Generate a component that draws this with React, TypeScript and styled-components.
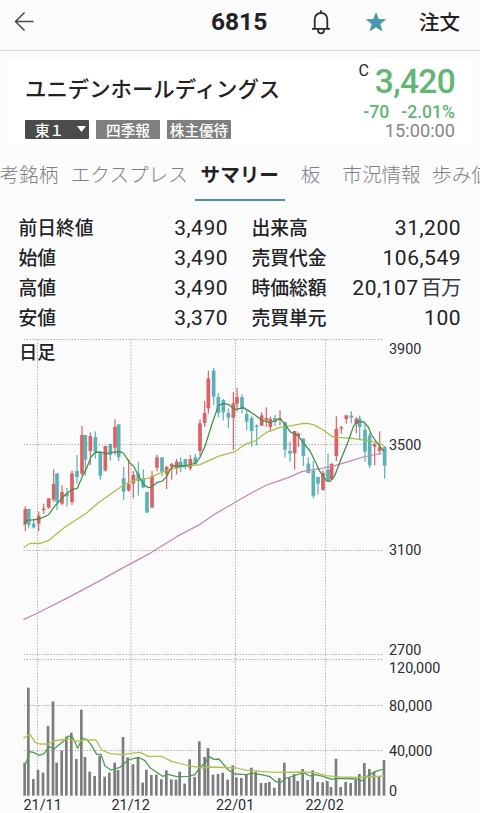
import styled, { createGlobalStyle } from "styled-components";

const GlobalStyle = createGlobalStyle`
  * {
    box-sizing: border-box;
  }
  body {
    margin: 0;
    background: #fbfbfc;
    color: #222224;
    font-family: Roboto, "Noto Sans CJK JP", sans-serif;
  }
`;

const Page = styled.div`
  width: 480px;
  height: 813px;
  overflow: hidden;
`;

const Header = styled.header`
  display: flex;
  align-items: center;
  height: 51px;
  padding: 0 20px 6px 13px;
  border-bottom: 1px solid #dcdcde;
`;

const Code = styled.h1`
  flex: 1;
  margin: 0;
  padding-left: 176px;
  font-size: 24.5px;
  font-weight: 700;
  line-height: 30px;
`;

const HeaderIcons = styled.div`
  display: flex;
  align-items: center;
  gap: 33px;
  margin-right: 32px;
`;

const OrderButton = styled.span`
  padding-top: 2px;
  font-size: 20.5px;
  font-weight: 500;
  line-height: 30px;
`;

const Card = styled.section`
  display: flex;
  justify-content: space-between;
  height: 85px;
  margin: 8px 8px 0;
  padding: 0 17px;
  background: #fff;
`;

const Name = styled.div`
  height: 61px;
  padding-top: 15px;
  font-size: 21.4px;
  font-weight: 500;
  line-height: 32px;
  white-space: nowrap;
`;

const Badges = styled.div`
  display: flex;
  gap: 7px;
`;

const Badge = styled.div<{ $dark?: boolean }>`
  display: flex;
  align-items: center;
  justify-content: center;
  gap: 13px;
  width: 64px;
  height: 18.5px;
  padding-left: ${({ $dark }) => ($dark ? "7px" : 0)};
  border-radius: 1px;
  background: ${({ $dark }) => ($dark ? "#4b4b4b" : "#7f7f7f")};
  color: #fff;
  font-family: "Noto Sans CJK JP", sans-serif;
  font-size: 14.6px;
  font-weight: 500;
  line-height: 17px;
  white-space: nowrap;
`;

const Quote = styled.div`
  display: flex;
  flex-direction: column;
  align-items: flex-end;
  white-space: nowrap;
`;

const PriceLine = styled.div`
  display: flex;
  align-items: flex-start;
  gap: 6px;
  height: 44px;
`;

const Mark = styled.span`
  padding-top: 2px;
  font-size: 16px;
  line-height: 19px;
`;

const Price = styled.span`
  color: #62b673;
  font-size: 33.5px;
  font-weight: 500;
  letter-spacing: -0.7px;
  line-height: 45px;
`;

const Change = styled.div`
  display: flex;
  gap: 12px;
  height: 18px;
  color: #62b673;
  font-size: 17.6px;
  font-weight: 500;
  line-height: 18px;
`;

const Time = styled.div`
  color: #858587;
  font-size: 18.2px;
  line-height: 19px;
`;

const Tabs = styled.nav`
  display: flex;
  height: 57px;
  padding-top: 15px;
  overflow: hidden;
  font-size: 19.6px;
  line-height: 34px;
  white-space: nowrap;
`;

const Tab = styled.div<{ $width: number; $gap?: number; $active?: boolean }>`
  display: flex;
  flex: none;
  justify-content: center;
  width: ${({ $width }) => $width}px;
  height: 41.5px;
  margin-left: ${({ $gap = 0 }) => $gap}px;
  color: ${({ $active }) => ($active ? "#222224" : "#808082")};
  font-weight: ${({ $active }) => ($active ? 700 : 300)};
  border-bottom: ${({ $active }) => ($active ? "2px solid #4b96a5" : "none")};
`;

const Stats = styled.div`
  display: grid;
  grid-template-columns: 209px 209px;
  grid-auto-rows: 30px;
  column-gap: 24px;
  height: 134px;
  padding: 12px 19px 0;
`;

const Stat = styled.div`
  display: flex;
  justify-content: space-between;
  line-height: 30px;
  white-space: nowrap;
`;

const Label = styled.span`
  padding-top: 1px;
  margin-left: -0.5px;
  font-size: 18.8px;
  font-weight: 500;
`;

const Value = styled.span`
  font-size: 21px;
  font-weight: 400;
  letter-spacing: 0.5px;

  small {
    margin-left: 2.5px;
    font-size: 20.5px;
    font-weight: 400;
    letter-spacing: -0.5px;
    color: #3c3c3e;
  }
`;

const Chart = styled.svg`
  display: block;
`;

const stats = [
  ["前日終値", "3,490", ""],
  ["出来高", "31,200", ""],
  ["始値", "3,490", ""],
  ["売買代金", "106,549", ""],
  ["高値", "3,490", ""],
  ["時価総額", "20,107", "百万"],
  ["安値", "3,370", ""],
  ["売買単元", "100", ""],
];

const tabs = [
  { label: "考銘柄", width: 58 },
  { label: "エクスプレス", width: 130.5, gap: 6 },
  { label: "サマリー", width: 90.5 },
  { label: "板", width: 51 },
  { label: "市況情報", width: 91 },
  { label: "歩み値", width: 60, gap: 4.5 },
];

const RED = "#dc6164";
const TEAL = "#5cb1b6";

// x, high, low, body top, body bottom, up (1) or down (0)
type Candle = [number, number, number, number, number, number];

const candles: { dx: number; items: Candle[] }[] = [
  {
    dx: 45,
    items: [
      [31, 514, 588, 522, 566, 1],
      [41, 522, 580, 522, 569, 0],
      [56, 550, 580, 566, 577, 0],
      [71, 530, 588, 542, 566, 1],
      [86, 506, 536, 521, 525, 1],
      [101, 490, 521, 490, 518, 1],
      [116, 403, 500, 447, 494, 1],
      [126, 415, 525, 415, 500, 0],
      [141, 451, 510, 471, 506, 1],
      [156, 459, 515, 476, 484, 0],
      [171, 407, 510, 415, 501, 1],
      [186, 360, 446, 408, 426, 0],
      [201, 273, 422, 300, 416, 1],
      [211, 300, 422, 300, 374, 0],
      [226, 292, 390, 303, 348, 1],
      [241, 289, 371, 306, 350, 0],
      [256, 350, 434, 350, 422, 0],
      [271, 333, 410, 333, 406, 1],
      [286, 325, 377, 328, 360, 0],
      [300, 253, 360, 276, 338, 1],
      [311, 268, 378, 268, 366, 0],
      [326, 396, 494, 430, 470, 0],
      [341, 372, 470, 447, 466, 1],
      [355, 408, 490, 420, 446, 1],
      [370, 380, 482, 415, 438, 0],
      [385, 403, 458, 432, 458, 0],
    ],
  },
  {
    dx: 405,
    items: [
      [36, 471, 533, 471, 533, 0],
      [51, 408, 518, 424, 518, 1],
      [66, 360, 408, 367, 398, 1],
      [81, 367, 423, 367, 410, 0],
      [95, 392, 462, 396, 418, 1],
      [110, 384, 434, 387, 395, 1],
      [125, 372, 418, 380, 400, 1],
      [137, 367, 411, 380, 396, 0],
      [151, 372, 403, 372, 396, 0],
      [166, 360, 406, 372, 400, 1],
      [181, 356, 390, 367, 386, 0],
      [195, 254, 362, 265, 348, 1],
      [209, 198, 276, 234, 264, 1],
      [220, 107, 236, 130, 220, 1],
      [236, 99, 210, 107, 185, 0],
      [250, 174, 247, 186, 234, 0],
      [265, 192, 256, 195, 232, 0],
      [280, 220, 280, 234, 248, 0],
      [295, 171, 345, 205, 248, 1],
      [306, 158, 230, 186, 206, 1],
      [321, 178, 235, 186, 222, 0],
      [335, 225, 285, 237, 260, 0],
      [350, 242, 335, 249, 288, 0],
      [365, 268, 331, 272, 276, 0],
      [380, 232, 272, 241, 272, 1],
    ],
  },
  {
    dx: 765,
    items: [
      [34, 217, 276, 249, 256, 1],
      [46, 245, 290, 252, 276, 1],
      [60, 240, 273, 249, 261, 0],
      [75, 225, 270, 250, 254, 1],
      [90, 261, 367, 261, 344, 0],
      [105, 320, 380, 348, 356, 0],
      [119, 288, 403, 288, 355, 1],
      [130, 293, 336, 295, 303, 1],
      [145, 309, 393, 311, 363, 0],
      [160, 367, 414, 386, 414, 0],
      [175, 378, 490, 407, 482, 0],
      [189, 426, 478, 426, 446, 0],
      [204, 406, 467, 414, 465, 1],
      [219, 356, 438, 404, 436, 0],
      [230, 384, 435, 387, 433, 1],
      [244, 244, 378, 282, 363, 1],
      [259, 273, 296, 277, 281, 1],
      [274, 240, 266, 241, 252, 1],
      [289, 229, 265, 242, 248, 0],
      [304, 246, 295, 252, 267, 1],
      [314, 242, 313, 250, 276, 0],
      [330, 262, 380, 285, 350, 0],
      [344, 293, 399, 301, 391, 0],
      [359, 323, 391, 327, 335, 1],
      [374, 289, 358, 336, 348, 1],
      [389, 333, 431, 336, 392, 0],
    ],
  },
];

// x, top
const volumes: { dx: number; items: [number, number][] }[] = [
  {
    dx: 30,
    items: [
      [44, 368], [55, 143], [70, 417], [84, 390], [99, 398], [114, 258], [129, 184],
      [140, 368], [155, 332], [169, 290], [184, 278], [199, 357], [214, 209], [225, 351],
      [239, 395], [254, 408], [269, 347], [284, 410], [298, 398], [314, 368], [324, 390],
      [339, 291], [353, 352], [369, 373], [384, 352], [398, 428], [409, 389],
    ],
  },
  {
    dx: 420,
    items: [
      [34, 405], [49, 404], [64, 418], [79, 391], [94, 418], [108, 419], [119, 395],
      [134, 431], [149, 358], [164, 411], [178, 304], [194, 351], [204, 324], [219, 404],
      [234, 402], [248, 398], [263, 419], [278, 376], [289, 412], [304, 414], [319, 403],
      [334, 383], [347, 396],
    ],
  },
  {
    dx: 780,
    items: [
      [3, 429], [17, 429], [28, 426], [43, 443], [58, 414], [73, 368], [88, 412],
      [102, 402], [113, 423], [128, 387], [143, 420], [158, 391], [173, 426], [188, 427],
      [202, 423], [213, 441], [228, 356], [242, 441], [257, 426], [272, 429], [287, 420],
      [298, 402], [313, 369], [328, 387], [342, 395], [357, 411], [372, 360],
    ],
  },
];

type Line = { color: string; parts: [number, string][] };

const priceLines: Line[] = [
  {
    color: "#c987ae",
    parts: [
      [0, "70,854 113,834 200,790 300,737 360,703 450,655 530,605 600,568 645,537 707,501"],
      [765, "0,468 35,450 65,440 100,428 140,410 190,402 240,392 280,380 325,366 380,355"],
    ],
  },
  {
    color: "#a6c047",
    parts: [
      [45, "26,638 45,625 75,625 100,617 150,576 215,534 250,503 300,468 330,447 365,434"],
      [405, "40,430 75,414 110,402 150,394 195,389 250,364 300,350 330,328 355,319"],
      [765, "0,318 35,292 75,277 110,272 145,265 160,266 175,269 200,282 230,304 250,307 290,310 340,317 370,324 387,332"],
    ],
  },
  {
    color: "#41904a",
    parts: [
      [45, "26,570 35,556 60,554 75,551 100,540 118,515 150,480 170,464 187,460 205,418 215,400 228,366 242,351 260,352 275,356 290,352 315,350 325,354 345,385 357,395 372,426"],
      [405, "25,448 40,458 50,456 65,443 82,438 95,425 105,404 115,393 150,393 183,384 195,367 210,334 230,270 250,212 265,206 280,208 300,224 325,218 345,230"],
      [765, "0,240 20,256 45,262 60,258 75,250 90,268 105,290 130,303 150,330 165,348 180,378 195,410 215,438 225,439 238,425 255,380 280,318 295,275 305,261 325,260 340,276 350,300 365,322 387,350"],
    ],
  },
];

const volumeLines: Line[] = [
  {
    color: "#4b9c55",
    parts: [
      [30, "42,380 50,365 58,335 70,337 88,346 102,341 118,320 132,327 150,312 162,302 175,288 188,292 203,325 217,295 230,298 245,317 260,343 273,343 285,378 303,390 330,382 355,360 385,352"],
      [420, "0,354 15,362 30,383 68,409 85,403 110,410 145,409 165,404 180,381 195,370 208,350 222,358 237,357 265,390 285,402 320,404 335,399 355,403"],
      [780, "0,403 30,410 48,425 60,428 80,414 110,405 130,398 150,408 165,404 190,409 215,418 235,415 290,417 305,423 320,410 345,395 372,387"],
    ],
  },
  {
    color: "#b3c24f",
    parts: [
      [30, "40,295 60,283 75,307 90,312 115,312 130,303 150,300 175,297 200,304 225,300 258,300 275,330 300,341 335,344 355,341"],
      [420, "0,337 25,349 65,349 95,364 150,378 185,384 210,381 290,384 320,391 355,393"],
      [780, "0,394 50,397 130,396 165,398 200,407 240,411 300,412 372,408"],
    ],
  },
];

const toPoints = ({ parts }: Line) =>
  parts
    .flatMap(([dx, text]) =>
      text.split(" ").map((pair) => {
        const [x, y] = pair.split(",").map(Number);
        return `${x + dx},${y}`;
      })
    )
    .join(" ");

const axis: [string, number, number][] = [
  ["3900", 389, 18.5],
  ["3500", 389, 114.5],
  ["3100", 389, 220],
  ["2700", 389, 320],
  ["120,000", 389, 338],
  ["80,000", 389, 375.5],
  ["40,000", 389, 421],
  ["0", 389, 460.5],
  ["21/11", 23.5, 475],
  ["21/12", 111.5, 475],
  ["22/01", 216, 475],
  ["22/02", 305.5, 475],
];

const StockChart = () => (
  <Chart width="480" height="478" viewBox="0 0 480 478">
    <g stroke="#b4b4b6" strokeWidth="1" strokeDasharray="1.5 1.5">
      {[4.5, 109.5, 215.5, 319.5, 324.5, 370.5, 415.5].map((y) => (
        <line key={y} x1="23.5" x2="382" y1={y} y2={y} />
      ))}
      {[37.5, 131, 235.5, 325.5].map((x) => (
        <line key={x} x1={x} x2={x} y1="4.5" y2="461" />
      ))}
    </g>
    <g transform="scale(0.33333)">
      {candles.map(({ dx, items }) =>
        items.map(([x, high, low, top, bottom, up]) => (
          <g key={x + dx} fill={up ? RED : TEAL}>
            <rect x={x + dx - 1.8} y={high} width="3.6" height={low - high} />
            <rect x={x + dx - 5.5} y={top} width="11" height={bottom - top} />
          </g>
        ))
      )}
      {priceLines.map((line) => (
        <polyline
          key={line.color}
          points={toPoints(line)}
          fill="none"
          stroke={line.color}
          strokeWidth="3.8"
          strokeLinejoin="round"
        />
      ))}
    </g>
    <g transform="translate(0 305) scale(0.33333)">
      {volumes.map(({ dx, items }) =>
        items.map(([x, top]) => (
          <rect key={x + dx} x={x + dx - 4} y={top} width="8" height={467 - top} fill="#7d7d7f" />
        ))
      )}
      {volumeLines.map((line) => (
        <polyline
          key={line.color}
          points={toPoints(line)}
          fill="none"
          stroke={line.color}
          strokeWidth="3.8"
          strokeLinejoin="round"
        />
      ))}
    </g>
    <g fill="#2c2c2e" fontSize="14.4">
      {axis.map(([text, x, y]) => (
        <text key={text} x={x} y={y}>
          {text}
        </text>
      ))}
    </g>
    <text x="19" y="23.5" fill="#222224" fontSize="18.3" fontWeight="500">
      日足
    </text>
  </Chart>
);

const App = () => (
  <Page>
    <GlobalStyle />
    <Header>
      <svg width="22" height="22" viewBox="0 0 22 22" fill="none" stroke="#48484a" strokeWidth="1.5">
        <path d="M20.5 10.5H3M11.5 1.5L2.5 10.5L11.5 19.5" />
      </svg>
      <Code>6815</Code>
      <HeaderIcons>
        <svg width="22" height="26" viewBox="0 0 22 26" fill="none" stroke="#2b2b2d" strokeWidth="1.8">
          <path d="M2 19.8H20M4.7 19.5V10.5C4.7 6.5 7.4 4 11 4S17.3 6.5 17.3 10.5V19.5M11 1.2V4M8.1 20V21.4A2.9 2.9 0 0 0 13.9 21.4V20" />
        </svg>
        <svg width="22" height="22" viewBox="0 0 22 22" fill="#4796ac">
          <path d="M11 1L13.7 7.9L21.2 8.3L15.4 13L17.4 20.4L11 16.2L4.6 20.4L6.6 13L0.8 8.3L8.3 7.9Z" />
        </svg>
      </HeaderIcons>
      <OrderButton>注文</OrderButton>
    </Header>
    <Card>
      <div>
        <Name>ユニデンホールディングス</Name>
        <Badges>
          <Badge $dark>
            東１
            <svg width="9" height="6" viewBox="0 0 9 6" fill="#fff">
              <path d="M0 0H9L4.5 6Z" />
            </svg>
          </Badge>
          <Badge>四季報</Badge>
          <Badge>株主優待</Badge>
        </Badges>
      </div>
      <Quote>
        <PriceLine>
          <Mark>C</Mark>
          <Price>3,420</Price>
        </PriceLine>
        <Change>
          <span>-70</span>
          <span>-2.01%</span>
        </Change>
        <Time>15:00:00</Time>
      </Quote>
    </Card>
    <Tabs>
      {tabs.map(({ label, width, gap }) => (
        <Tab key={label} $width={width} $gap={gap} $active={label === "サマリー"}>
          {label}
        </Tab>
      ))}
    </Tabs>
    <Stats>
      {stats.map(([label, value, unit]) => (
        <Stat key={label}>
          <Label>{label}</Label>
          <Value>
            {value}
            {unit && <small>{unit}</small>}
          </Value>
        </Stat>
      ))}
    </Stats>
    <StockChart />
  </Page>
);

export default App;
